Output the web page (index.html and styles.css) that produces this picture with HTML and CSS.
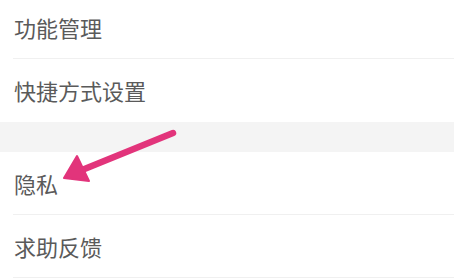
FILE: index.html
```html
<!DOCTYPE html>
<html lang="zh-CN">
<head>
  <meta charset="UTF-8" />
  <title>设置</title>
  <link rel="stylesheet" href="styles.css">
</head>
<body>

  <div class="list first">
    <div class="item">功能管理</div>
    <div class="item last">快捷方式设置</div>
  </div>

  <div class="gap"></div>

  <div class="list">
    <div class="item">隐私</div>
    <div class="item">求助反馈</div>
  </div>

  <svg class="arrow" width="454" height="280" viewBox="0 0 454 280">
    <line x1="173" y1="133" x2="82" y2="170" stroke="#e2347b" stroke-width="6.5" stroke-linecap="round"/>
    <polygon points="64,178 77,156 89,181" fill="#e2347b" stroke="#e2347b" stroke-width="2" stroke-linejoin="round"/>
  </svg>

</body>
</html>
```

FILE: styles.css
```css
body {
  margin: 0;
  width: 454px;
  height: 280px;
  overflow: hidden;
  background: #fff;
  font-family: "Noto Sans CJK SC", "Noto Sans", sans-serif;
  position: relative;
}
.list.first {
  margin-top: -4px;
}
.item {
  height: 62px;
  line-height: 62px;
  padding-left: 14px;
  font-size: 22px;
  color: #5a5a5a;
  position: relative;
  border-bottom: 1px solid transparent;
}
.item::after {
  content: "";
  position: absolute;
  left: 13px;
  right: 0;
  bottom: -1px;
  border-bottom: 1px solid #f0f0f0;
}
.item.last::after {
  display: none;
}
.gap {
  height: 30px;
  background: #f4f4f4;
}
.arrow {
  position: absolute;
  left: 0;
  top: 0;
}
```
